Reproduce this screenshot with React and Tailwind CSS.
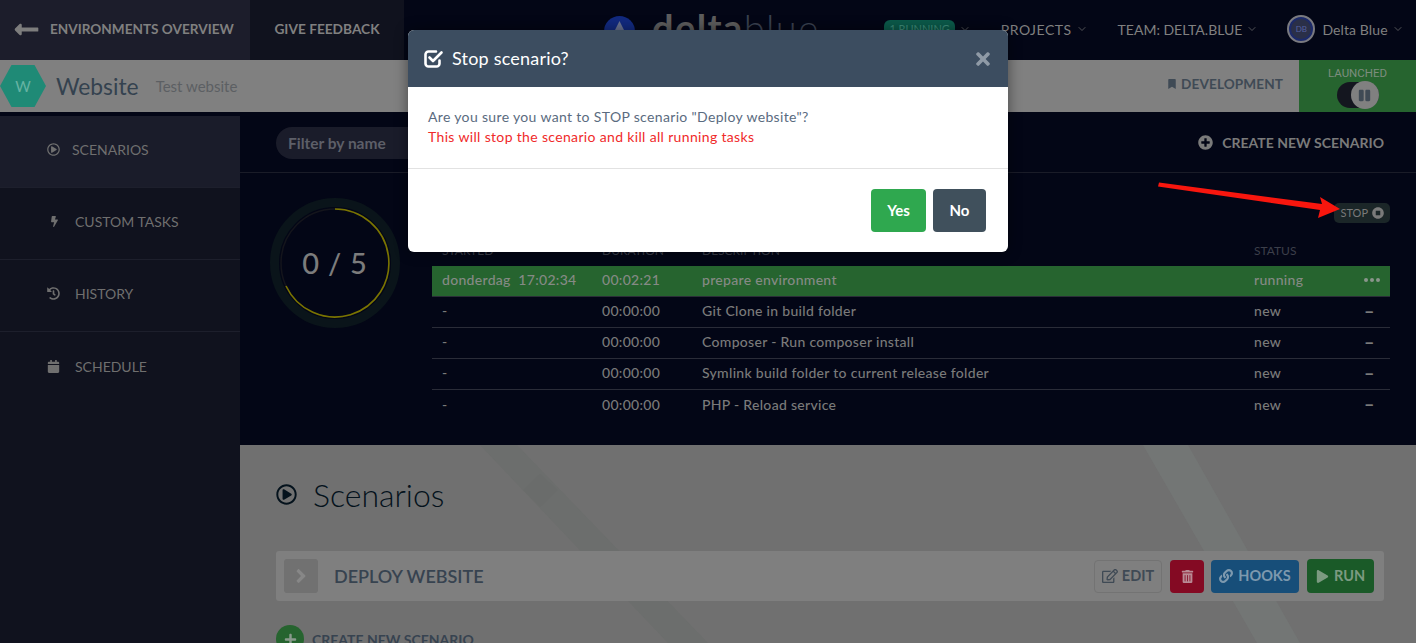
import {
  FaAngleRight, FaBolt, FaBookmark, FaCalendar, FaHistory, FaLink, FaLongArrowAltLeft,
  FaPause, FaPlay, FaPlus, FaPlusCircle, FaRegEdit, FaRegPlayCircle, FaStopCircle, FaTimes, FaTrashAlt,
} from "react-icons/fa";
import { ChevronDown } from "lucide-react";

// Dimmed environment page with the stop-scenario modal open on top.

const NAV = [
  { label: "SCENARIOS", icon: FaRegPlayCircle, active: true, pad: "pl-[47px]", gap: "gap-[12px]" },
  { label: "CUSTOM TASKS", icon: FaBolt, pad: "pl-[49px]", gap: "gap-[15px]" },
  { label: "HISTORY", icon: FaHistory, pad: "pl-[47px]", gap: "gap-[15px]" },
  { label: "SCHEDULE", icon: FaCalendar, pad: "pl-[47px]", gap: "gap-[15px]" },
];

const TASKS = [
  { started: "-", duration: "00:00:00", text: "Git Clone in build folder" },
  { started: "-", duration: "00:00:00", text: "Composer - Run composer install" },
  { started: "-", duration: "00:00:00", text: "Symlink build folder to current release folder" },
  { started: "-", duration: "00:00:00", text: "PHP - Reload service" },
];

function Chevron() {
  return <ChevronDown size={12} strokeWidth={1.5} className="ml-[4px] text-[#6e6e6e]" />;
}

function TopBar() {
  return (
    <div className="flex h-[60px] items-center bg-[#030616] text-[14px] font-bold text-[#808080]">
      <div className="flex h-full w-[250px] items-center bg-[#1c1d2b] pb-[2px] pl-[13px] text-[13.6px]">
        <FaLongArrowAltLeft size={27} className="mr-[10px] text-[#7d7d7d]" />
        ENVIRONMENTS OVERVIEW
      </div>
      <div className="flex h-full w-[154px] items-center justify-center bg-[#10121e] pb-[2px] text-[13.7px]">GIVE FEEDBACK</div>
      <div className="ml-[200px] flex items-center self-start pt-[16px]">
        <svg width="31" height="31" viewBox="0 0 31 31">
          <circle cx="15.5" cy="15.5" r="15.5" fill="#122a80" />
          <path d="M15.5 5 L23 20 L8 20 Z" fill="#6a7390" />
        </svg>
        <div className="-mt-[9px] ml-[17px] text-[38px] leading-none tracking-[1.4px]">
          <span className="font-bold text-[#5d5d5d]">delta</span><span className="font-light text-[#3a4150]">blue</span>
        </div>
      </div>
      <div className="mb-[2px] ml-[65px] flex items-center">
        <span className="rounded-[6px] bg-[#0b5a4a] px-[5px] py-[1px] text-[11px] font-normal text-[#3d8a78]">1 RUNNING</span>
        <Chevron />
      </div>
      <div className="mb-[2px] ml-[30px] flex items-center font-normal tracking-[0.5px]">PROJECTS<Chevron /></div>
      <div className="mb-[2px] ml-[30px] flex items-center font-normal">TEAM: DELTA.BLUE<Chevron /></div>
      <div className="mb-[2px] ml-[29px] flex h-[28px] w-[28px] items-center justify-center rounded-full border-2 border-[#7a7a80] bg-[#1c2a6a]">
        <span className="flex h-[20px] w-[20px] items-center justify-center rounded-full bg-[#2a2f48] text-[8px] font-normal text-[#5560a0]">DB</span>
      </div>
      <div className="mb-[2px] ml-[7px] flex items-center font-normal tracking-[0.1px]">Delta Blue<Chevron /></div>
    </div>
  );
}

function SubHeader() {
  return (
    <div className="flex h-[52px] items-center bg-[#808080]">
      <div className="flex h-[42px] w-[46px] items-center justify-center bg-[#1f8a76] text-[15px] text-[#66b3a3] [clip-path:polygon(25%_0,75%_0,100%_50%,75%_100%,25%_100%,0_50%)]">W</div>
      <div className="ml-[10px] text-[22.8px] text-[#34424f]">Website</div>
      <div className="ml-[17px] text-[15px] text-[#5c5f63]">Test website</div>
      <div className="ml-auto flex items-center gap-[4px] pb-[3px] text-[13.6px] font-bold tracking-[0.1px] text-[#3f4a55]">
        <FaBookmark size={10} />
        DEVELOPMENT
      </div>
      <div className="ml-[16px] flex h-full w-[117px] flex-col items-center bg-[#26642f] pt-[6px]">
        <div className="font-['Roboto',sans-serif] text-[11.5px] leading-[14px] text-[#7d8d7f]">LAUNCHED</div>
        <div className="relative mt-[2px] h-[26px] w-[42px] rounded-full bg-[#14161f]">
          <span className="absolute -top-[1px] right-0 flex h-[28px] w-[28px] items-center justify-center rounded-full bg-[#808080] text-[#3f4a55]">
            <FaPause size={13} />
          </span>
        </div>
      </div>
    </div>
  );
}

function Sidebar() {
  return (
    <div className="w-[240px] shrink-0 pt-[4px]">
      <div className="h-full bg-[#10121e]">
        {NAV.map((n) => (
          <div key={n.label} className={`flex h-[72px] items-center border-b border-[#1d1f2c] pb-[4px] text-[14px] text-[#6f6f6f] ${n.pad} ${n.gap} ${n.active ? "bg-[#1a1c2a]" : ""} last:border-b-0`}>
            <n.icon size={n.label === "CUSTOM TASKS" ? 11 : 13} />
            {n.label}
          </div>
        ))}
      </div>
    </div>
  );
}

function ProgressRing() {
  return (
    <div className="relative h-[130px] w-[130px]">
      <svg width="130" height="130" viewBox="0 0 130 130">
        <circle cx="65" cy="65" r="60.5" fill="none" stroke="#0a141a" strokeWidth="9" />
        <circle cx="65" cy="65" r="54" fill="none" stroke="#14151c" strokeWidth="1.5" />
        <path d="M65 11 A54 54 0 1 1 16 88" fill="none" stroke="#7a7400" strokeWidth="1.6" />
      </svg>
      <div className="absolute inset-0 flex items-center justify-center text-[29px] font-medium tracking-[0.8px] text-[#7c7c7c]">0 / 5</div>
    </div>
  );
}

function TaskRow({ started, duration, text, status, running }) {
  return (
    <div className={`grid h-[31px] grid-cols-[170px_100px_552px_110px_1fr] items-center border-b pb-[3px] text-[14px] font-medium tracking-[0.3px] ${running ? "border-[#2a2e38] bg-[#26642f] text-[#858a85]" : "border-[#2a2c38] text-[#7a7a7a] last:border-b-0"}`}>
      <div className="whitespace-pre pl-[10px]">{started}</div>
      <div>{duration}</div>
      <div>{text}</div>
      <div>{status}</div>
      {running ? (
        <div className="flex gap-[2px]">
          <span className="h-[4px] w-[4px] rounded-full bg-[#8a958b]" />
          <span className="h-[4px] w-[4px] rounded-full bg-[#8a958b]" />
          <span className="h-[4px] w-[4px] rounded-full bg-[#8a958b]" />
        </div>
      ) : (
        <div className="text-[18px] font-bold leading-none">–</div>
      )}
    </div>
  );
}

function TopPanel() {
  return (
    <div className="h-[333px] bg-[#030616]">
      <div className="flex h-[61px] items-center justify-between border-b border-[#1a1c28] pl-[36px] pr-[32px]">
        <div className="mt-[1px] flex h-[32px] w-[300px] items-center rounded-full bg-[#1a1c2a] pl-[12px] pt-[2px] text-[15.5px] font-bold text-[#5d5f68]">Filter by name</div>
        <div className="flex items-center gap-[9px] text-[14px] font-bold text-[#7a7a7a]">
          <FaPlusCircle size={15} />
          CREATE NEW SCENARIO
        </div>
      </div>
      <div className="flex pl-[30px] pr-[26px] pt-[25px]">
        <ProgressRing />
        <div className="ml-[32px] flex-1">
          <div className="flex justify-end pt-[5px]">
            <div className="flex h-[20px] items-center gap-[4px] rounded-[5px] bg-[#1b2628] px-[6px] text-[11px] text-[#7a7a7a]">
              STOP
              <FaStopCircle size={12} />
            </div>
          </div>
          <div className="mb-[7px] mt-[19px] grid h-[17px] grid-cols-[170px_100px_552px_1fr] items-center text-[12px] text-[#3c3f4a]">
            <div className="pl-[10px]">STARTED</div>
            <div>DURATION</div>
            <div>DESCRIPTION</div>
            <div>STATUS</div>
          </div>
          <TaskRow running started="donderdag  17:02:34" duration="00:02:21" text="prepare environment" status="running" />
          {TASKS.map((t) => (
            <TaskRow key={t.text} {...t} status="new" />
          ))}
        </div>
      </div>
    </div>
  );
}

function ScenarioCard() {
  return (
    <div className="flex h-[50px] items-center rounded-[3px] bg-[#7f7f7f] pl-[8px] pr-[10px]">
      <div className="flex h-[34px] w-[34px] items-center justify-center rounded-[3px] bg-[#717171] text-[#878787]">
        <FaAngleRight size={22} />
      </div>
      <div className="ml-[16px] text-[18px] font-semibold text-[#374350]">DEPLOY WEBSITE</div>
      <div className="ml-auto flex items-center text-[14.5px] font-bold">
        <div className="flex h-[33px] w-[68px] items-center justify-center gap-[4px] rounded-[4px] border border-[#737373] text-[#3f4a55]">
          <FaRegEdit size={16} />
          EDIT
        </div>
        <div className="ml-[8px] flex h-[33px] w-[34px] items-center justify-center rounded-[4px] bg-[#840a23] text-[#b98a94]">
          <FaTrashAlt size={13} />
        </div>
        <div className="ml-[7px] flex h-[33px] w-[88px] items-center justify-center gap-[5px] rounded-[4px] bg-[#174e79] text-[#7d99ae]">
          <FaLink size={14} />
          HOOKS
        </div>
        <div className="ml-[8px] flex h-[34px] w-[67px] items-center justify-center gap-[5px] rounded-[4px] bg-[#1a5a28] text-[#7c9a81]">
          <FaPlay size={13} />
          RUN
        </div>
      </div>
    </div>
  );
}

function BottomPanel() {
  return (
    <div className="relative flex-1 overflow-hidden bg-[#707070] pl-[36px] pr-[32px]">
      <svg className="absolute inset-0" width="1176" height="198" viewBox="0 0 1176 198">
        <path d="M903 0 L948 0 L1060 198 L1017 198 Z" fill="#737675" />
        <path d="M240 0 L277 0 L468 198 L428 198 Z" fill="#6c6e6d" />
        <path d="M300 29 L318 45 L300 62 L283 45 Z" fill="#6a6c6b" />
      </svg>
      <div className="relative">
        <div className="flex h-[106px] items-center gap-[16px] pb-[7px] text-[32px] font-light text-[#04121c]">
          <FaRegPlayCircle size={21} />
          Scenarios
        </div>
        <ScenarioCard />
        <div className="mt-[24px] flex items-center gap-[8px] text-[14px] font-bold text-[#374350]">
          <span className="flex h-[28px] w-[28px] items-center justify-center rounded-full bg-[#26642f] text-[#8a9a8d]">
            <FaPlus size={13} />
          </span>
          CREATE NEW SCENARIO
        </div>
      </div>
    </div>
  );
}

function StopModal() {
  return (
    <div className="absolute left-[408px] top-[30px] w-[600px] overflow-hidden rounded-[6px] bg-white shadow-[0_0_14px_rgba(0,0,0,0.45)]">
      <div className="flex h-[57px] items-center bg-[#3c4d60] px-[16px] text-white">
        <svg width="20" height="18" viewBox="0 0 20 18" fill="none" stroke="currentColor" strokeWidth="2.6" strokeLinecap="round" strokeLinejoin="round">
          <path d="M15.5 10.5 V13.5 A3 3 0 0 1 12.5 16.5 H4.5 A3 3 0 0 1 1.5 13.5 V4.5 A3 3 0 0 1 4.5 1.5 H12" />
          <path d="M5.5 7.5 L9 11 L17.5 2.5" />
        </svg>
        <span className="ml-[8px] text-[18px] tracking-[0.2px]">Stop scenario?</span>
        <FaTimes size={20} className="ml-auto -mr-[1px] text-[#8f9aa6]" />
      </div>
      <div className="h-[82px] border-b border-[#e2e2e2] px-[20px] pt-[20px] text-[14px] leading-[20px] tracking-[0.34px]">
        <div className="text-[#5a6b80]">Are you sure you want to STOP scenario "Deploy website"?</div>
        <div className="text-[#f02a2a]">This will stop the scenario and kill all running tasks</div>
      </div>
      <div className="flex h-[83px] justify-end gap-[7px] pr-[22px] pt-[20px] text-[15px] font-bold text-white">
        <button className="h-[43px] w-[55px] rounded-[4px] bg-[#2fa84f]">Yes</button>
        <button className="h-[43px] w-[53px] rounded-[4px] bg-[#40505c]">No</button>
      </div>
    </div>
  );
}

export default function App() {
  return (
    <div className="relative h-[643px] w-[1416px] overflow-hidden bg-[#030616] font-['Lato',sans-serif]">
      <TopBar />
      <SubHeader />
      <div className="flex h-[531px]">
        <Sidebar />
        <div className="flex flex-1 flex-col">
          <TopPanel />
          <BottomPanel />
        </div>
      </div>
      <StopModal />
      <svg className="absolute left-[1150px] top-[175px]" width="200" height="50" viewBox="0 0 200 50">
        <path d="M9 7.5 L172 29 L170 22 L190 34 L168 43 L170 35 L8 11.5 Z" fill="#f8160e" />
      </svg>
    </div>
  );
}
